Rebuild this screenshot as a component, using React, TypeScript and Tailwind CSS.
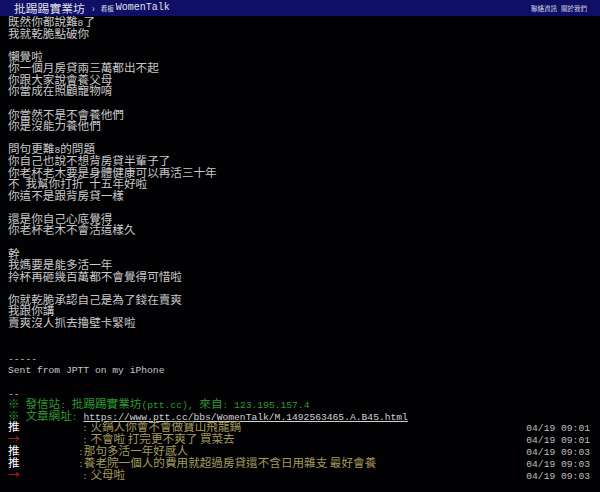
import React from 'react';

const cjk = "font-['Noto_Sans_CJK_TC',sans-serif]";

// split a line into ascii / wide runs so half-width chars keep the terminal grid
function Txt({ s }: { s: string }) {
  const parts = s.match(/[\x00-\x7f]+|[^\x00-\x7f]+/g) || [];
  return (
    <>
      {parts.map((p, i) =>
        /^[\x00-\x7f]/.test(p) ? (
          <span key={i} className="font-['Liberation_Mono',monospace] text-[9.67px] font-light">{p}</span>
        ) : (
          <span key={i}>{p}</span>
        )
      )}
    </>
  );
}

const body = [
  '既然你都說難8了',
  '我就乾脆點破你',
  '',
  '懶覺啦',
  '你一個月房貸兩三萬都出不起',
  '你跟大家說會養父母',
  '你當成在照顧寵物唷',
  '',
  '你當然不是不會養他們',
  '你是沒能力養他們',
  '',
  '問句更難8的問題',
  '你自己也說不想背房貸半輩子了',
  '你老杯老木要是身體健康可以再活三十年',
  '不 我幫你打折 十五年好啦',
  '你這不是跟背房貸一樣',
  '',
  '還是你自己心底覺得',
  '你老杯老木不會活這樣久',
  '',
  '幹',
  '我媽要是能多活一年',
  '拎杯再砸幾百萬都不會覺得可惜啦',
  '',
  '你就乾脆承認自己是為了錢在賣爽',
  '我跟你講',
  '賣爽沒人抓去擼壁卡緊啦',
  '',
  '',
  '-----',
  'Sent from JPTT on my iPhone',
  '',
  '--',
];

const pushes = [
  { tag: '推', colon: 'pl-[62px]', text: ' 火鍋人你會不會做寶山飛龍鍋', time: '04/19 09:01' },
  { tag: '→', colon: 'pl-[62px]', text: ' 不會啦 打完更不爽了 買菜去', time: '04/19 09:01' },
  { tag: '推', colon: 'pl-[58px]', text: '那句多活一年好感人', time: '04/19 09:03' },
  { tag: '推', colon: 'pl-[58px]', text: '養老院一個人的費用就超過房貸還不含日用雜支 最好會養', time: '04/19 09:03' },
  { tag: '→', colon: 'pl-[62px]', text: ' 父母啦', time: '04/19 09:03' },
];

export default function App() {
  return (
    <div className={`w-[600px] h-[492px] overflow-hidden bg-[#020204] text-[#c8c8c8] ${cjk} text-[11.6px] leading-[11.5px]`}>
      {/* top bar */}
      <div className="h-[16px] bg-[#0f0f66] flex items-center pl-[14px] pr-[13px] text-[#e0e0e8]">
        <span className="text-[11.8px] leading-none">批踢踢實業坊</span>
        <span className="ml-[7px] text-[10px] leading-none text-[#c8c8d8]">›</span>
        <span className="ml-[6px] text-[6.5px] leading-none">看板</span>
        <span className="ml-[2px] font-['Liberation_Mono',monospace] text-[10px] leading-none">WomenTalk</span>
        <div className="ml-auto flex gap-[4px] text-[6.5px] leading-none text-[#d8d8e8]">
          <span>聯絡資訊</span>
          <span>關於我們</span>
        </div>
      </div>

      {/* article body */}
      <div className="pl-[8px]">
        {body.map((l, i) => (
          <div key={i} className="h-[11.58px] whitespace-pre">
            <Txt s={l} />
          </div>
        ))}
        <div className="h-[11.58px] whitespace-pre text-[#2f9a2f]">
          <Txt s="※ 發信站: 批踢踢實業坊(ptt.cc), 來自: 123.195.157.4" />
        </div>
        <div className="h-[11.58px] whitespace-pre text-[#2f9a2f]">
          <Txt s="※ 文章網址: " />
          <span className="text-[#d0d0d0] underline underline-offset-[1px]">
            <Txt s="https://www.ptt.cc/bbs/WomenTalk/M.1492563465.A.B45.html" />
          </span>
        </div>

        {pushes.map((p, i) => (
          <div key={i} className="h-[12px] flex whitespace-pre pr-[10px]">
            <span className={p.tag === '推' ? 'w-[12px] text-white' : 'w-[12px] text-[#d02020]'}>{p.tag}</span>
            <span className={`${p.colon} text-[#a39a5c]`}>
              <Txt s=":" />
              {p.text}
            </span>
            <span className="ml-auto text-[#bdbdbd]">
              <Txt s={p.time} />
            </span>
          </div>
        ))}
      </div>
    </div>
  );
}
